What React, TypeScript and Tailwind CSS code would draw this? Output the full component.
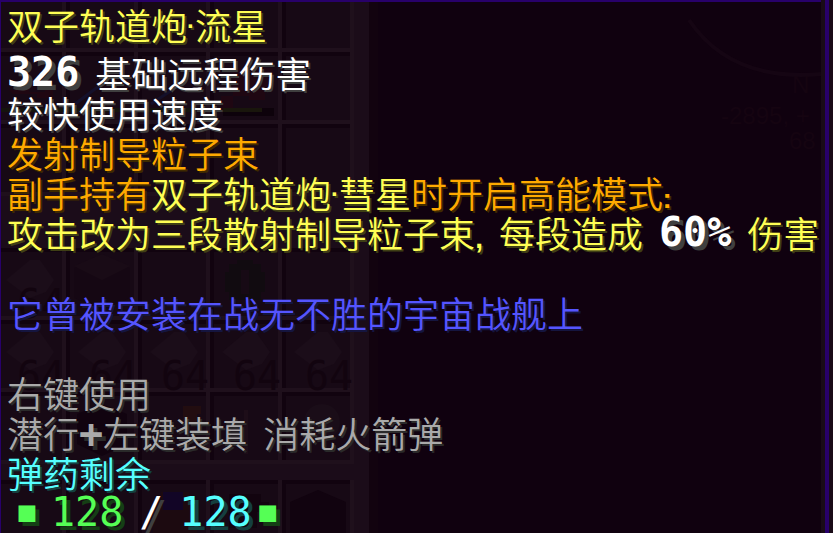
import type { ReactNode } from "react";

const gold = "text-[#ffaa00] [text-shadow:2px_2px_0_#3f2a00]";
const yellow = "text-[#ffff55] [text-shadow:2px_2px_0_#3f3f15]";
const white = "text-white [text-shadow:2px_2px_0_#3f3f3f]";
const blue = "text-[#5555ff] [text-shadow:2px_2px_0_#15153f]";
const gray = "text-[#aaaaaa] [text-shadow:2px_2px_0_#2a2a2a]";
const aqua = "text-[#55ffff] [text-shadow:2px_2px_0_#153f3f]";

const whiteNumber = "font-bold text-white [text-shadow:4px_4px_0_#3f3f3f]";
const grayNumber = "font-bold [text-shadow:4px_4px_0_#2a2a2a]";
const greenNumber = "text-[#55ff55] [text-shadow:4px_4px_0_#153f15]";
const aquaNumber = "text-[#55ffff] [text-shadow:4px_4px_0_#153f3f]";
const slashNumber = "text-white [text-shadow:4px_4px_0_#3f3f3f]";

function Line({ className, children }: { className: string; children?: ReactNode }) {
  return (
    <p className={`flex h-10 gap-4 whitespace-nowrap text-[36px] leading-10 font-[350] ${className}`}>{children}</p>
  );
}

function Mark({ children }: { children: ReactNode }) {
  return (
    <span className="inline-flex w-2 justify-center font-['Liberation_Sans',sans-serif] text-[28px] leading-6 font-bold">
      {children}
    </span>
  );
}

function Dot() {
  return (
    <span className="inline-flex w-2 justify-center align-[6px] font-['Liberation_Sans',sans-serif] text-[24px] leading-6 font-bold">
      ·
    </span>
  );
}

function Num({ className, children }: { className: string; children: ReactNode }) {
  return (
    <span className={`font-['DejaVu_Sans_Mono',monospace] text-[40px] leading-10 ${className}`}>{children}</span>
  );
}

function Square() {
  return (
    <span
      className={`flex w-4 justify-center font-['DejaVu_Sans_Mono',monospace] text-[28px] leading-10 ${greenNumber}`}
    >
      ■
    </span>
  );
}

const slotColumns = [-7, 65, 137, 209, 281];
const slotRows = [-22, 50, 122, 246, 318, 390, 478];
const stacks = [
  [-7, 246],
  [-7, 318],
  [65, 318],
  [137, 318],
  [209, 318],
  [281, 318],
];

function Inventory() {
  return (
    <svg className="absolute inset-0 h-full w-full" aria-hidden="true">
      <rect width="368" height="100%" fill="#1b0c19" />
      <rect x="368" width="9" height="100%" fill="#12030f" />
      {slotRows.map((y) =>
        slotColumns.map((x) => (
          <g key={`${x}-${y}`}>
            <rect x={x} y={y} width="72" height="72" fill="#1f101c" />
            <rect x={x} y={y} width="68" height="68" fill="#11030f" />
            <rect x={x + 4} y={y + 4} width="64" height="64" fill="#170915" />
          </g>
        )),
      )}
      <g fill="#240711">
        <path d="M232 66h40v22h-8v10h-16v-4h-16z" opacity=".7" />
        <path d="M220 94h12v14h-12z" opacity=".7" />
        <path d="M8 88h8v-4h12v6h16v-4h8v10H36v-4H12z" opacity=".6" />
      </g>
      <rect x="222" y="106" width="51" height="8" fill="#0d020b" />
      <rect x="222" y="106" width="39" height="4" fill="#19160c" />
      <rect y="106" width="192" height="4" fill="#15130d" />
      <path d="M74 102l24-18M150 102l30-20" stroke="#14102a" strokeWidth="3" />
      {stacks.map(([x, y]) => (
        <g key={`${x}-${y}`}>
          <path d={`M${x + 12} ${y + 32}l24-20h10l14 20-8 12-16 6z`} fill="#1b0d19" />
          <text
            x={x + 23}
            y={y + 70}
            fill="#12040f"
            className="font-['DejaVu_Sans_Mono',monospace] text-[40px]"
          >
            64
          </text>
        </g>
      ))}
      <path d="M73 266l28-12 28 12v30l-28 12-28-12z" fill="#150713" />
      <path d="M73 264l28-12 28 12-28 14z" fill="#190b16" />
      <path d="M236 258h16v4h8v8h4v20h-4v8h-32v-8h-4v-20h4v-8h8z" fill="#110b10" />
      <path d="M240 268h8v24h-8z" fill="#170a15" />
      <path d="M76 412l25-10 25 10v30l-25 12-25-12z" fill="#11030f" />
      <path d="M182 404h18v8h-4v8h-14z" fill="#220d10" />
      <path d="M243 408h4v44h-4z" fill="#1d0d18" />
      <circle cx="321" cy="420" r="18" fill="#1a0d18" />
      <path d="M152 498h8v-8h28v8h8v40h-44z" fill="#1c0a10" />
      <path d="M162 490h20v18h-20z" fill="#120526" />
      <path d="M228 492h32v8h8v10h-12v16h-28z" fill="#12040f" />
      <path d="M289 500l28-12 28 12v40h-56z" fill="#11030f" />
    </svg>
  );
}

function MapOverlay() {
  return (
    <svg className="absolute top-0 right-0 h-40 w-40" viewBox="0 0 160 160" aria-hidden="true">
      <path d="M28 18Q70 80 160 72" fill="none" stroke="#150513" strokeWidth="4" />
      <g fill="#150411" className="font-['Liberation_Sans',sans-serif] text-[24px]">
        <text x="131" y="91">N</text>
        <text x="60" y="122">-2895, +</text>
        <text x="128" y="147">68</text>
      </g>
    </svg>
  );
}

export default function App() {
  return (
    <main className="flex min-h-screen bg-[#10010f] font-['Noto_Sans_CJK_SC',sans-serif]">
      <section className="relative min-w-0 flex-1 border-t-2 border-l border-[#28006a] pl-1.5">
        <Inventory />
        <MapOverlay />
        <div className="relative pt-0.5">
          <Line className={yellow}>
            <span>双子轨道炮<Dot />流星</span>
          </Line>
          <div className="pt-2">
            <Line className={white}>
              <Num className={whiteNumber}>326</Num>
              <span>基础远程伤害</span>
            </Line>
            <Line className={white}>较快使用速度</Line>
            <Line className={gold}>发射制导粒子束</Line>
            <Line className={gold}>
              <span>
                副手持有<span className={yellow}>双子轨道炮<Dot />彗星</span>时开启高能模式<Mark>:</Mark>
              </span>
            </Line>
            <Line className={yellow}>
              <span>攻击改为三段散射制导粒子束<Mark>,</Mark></span>
              <span>每段造成</span>
              <Num className={whiteNumber}>60%</Num>
              <span>伤害</span>
            </Line>
            <Line className={`pt-10 box-content ${blue}`}>它曾被安装在战无不胜的宇宙战舰上</Line>
            <Line className={`pt-10 box-content ${gray}`}>右键使用</Line>
            <Line className={gray}>
              <span>潜行<Num className={grayNumber}>+</Num>左键装填</span>
              <span>消耗火箭弹</span>
            </Line>
            <Line className={aqua}>弹药剩余</Line>
            <p className="flex h-9 gap-4 pl-3 whitespace-nowrap">
              <Square />
              <Num className={greenNumber}>128</Num>
              <Num className={slashNumber}>/</Num>
              <span className="flex gap-2">
                <Num className={aquaNumber}>128</Num>
                <Square />
              </span>
            </p>
          </div>
        </div>
      </section>
      <div className="flex w-3 justify-center bg-[#190b17]">
        <div className="w-1 bg-[#28006a]" />
      </div>
    </main>
  );
}
